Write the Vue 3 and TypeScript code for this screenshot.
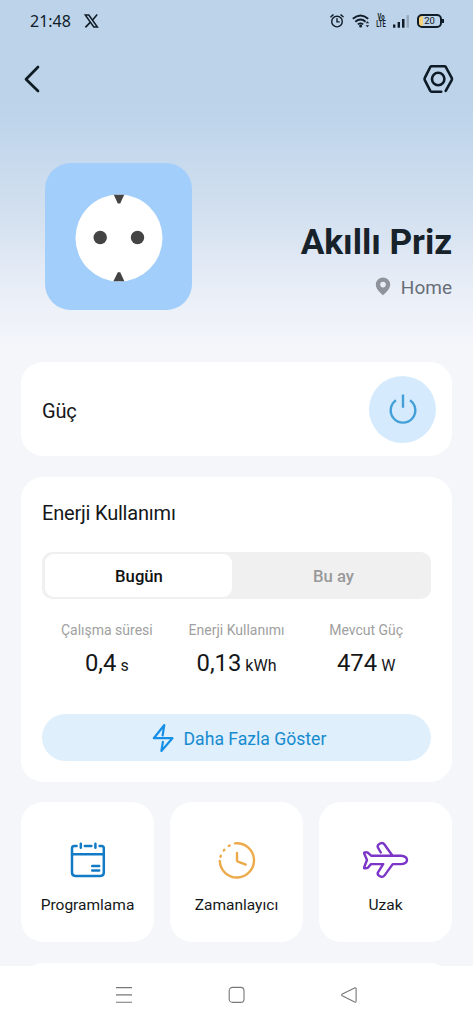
<script setup lang="ts">
import { ref } from 'vue'

interface Stat {
  label: string
  value: string
  unit: string
}

const stats: Stat[] = [
  { label: 'Çalışma süresi', value: '0,4', unit: 's' },
  { label: 'Enerji Kullanımı', value: '0,13', unit: 'kWh' },
  { label: 'Mevcut Güç', value: '474', unit: 'W' },
]

const periods: string[] = ['Bugün', 'Bu ay']
const active = ref<number>(0)
</script>

<template>
  <div class="screen">
    <header class="status">
      <span class="time">21:48</span>
      <svg class="x-logo" width="15" height="14" viewBox="0 0 15 14" fill="none" stroke="#101c28">
        <path d="M1.2 1h3.6l8.6 12H9.8z" stroke-width="1.5" />
        <path d="M13.2.6 8.6 5.9M6.2 8.4 1.4 13.4" stroke-width="1.6" />
      </svg>
      <div class="indicators">
        <svg width="14" height="14" viewBox="0 0 14 14" fill="none" stroke="#101c28" stroke-width="1.4" stroke-linecap="round">
          <circle cx="7" cy="7.6" r="5.3" />
          <path d="M7 4.8v3.1h2.2M.9 2.8 3.1.9M13.1 2.8 10.9.9" />
        </svg>
        <svg class="wifi" width="18" height="14" viewBox="0 0 18 14" fill="none" stroke="#101c28" stroke-width="1.8">
          <path d="M.8 4.8Q8.5-1.8 16.2 4.8M3.3 7.7q5.2-4.4 10.3 0M5.8 10.4q2.7-2 5.4 0" />
          <circle cx="8.6" cy="12" r="1.5" fill="#101c28" stroke="none" />
          <path d="m13.6 9.2 1.8-2 1.8 2zM13.6 11.2l1.8 2 1.8-2z" fill="#101c28" stroke="none" />
        </svg>
        <span class="volte">Vo LTE</span>
        <svg class="signal" width="18" height="14" viewBox="0 0 18 14" fill="#101c28">
          <rect x="1" y="10.5" width="2.4" height="3.2" />
          <rect x="5.6" y="8" width="2.4" height="5.7" />
          <rect x="10" y="5" width="2.5" height="8.7" />
          <rect x="14.5" y="1.2" width="2.5" height="12.5" fill="#98a9bb" />
        </svg>
        <span class="battery">20</span>
      </div>
    </header>

    <nav class="topbar">
      <svg width="16" height="28" viewBox="0 0 16 28" fill="none" stroke="#101c24" stroke-width="2.7" stroke-linecap="round" stroke-linejoin="round">
        <path d="M14 2 2 14.2 14 26" />
      </svg>
      <svg width="32" height="30" viewBox="0 0 32 30" fill="none" stroke="#0e1b26" stroke-width="2.6" stroke-linecap="round" stroke-linejoin="round">
        <path d="M19.2 27.7H9.6Q8.8 27.7 8.3 26.9L2.8 16.2Q2.2 15 2.8 13.9L8.3 3Q8.8 2.2 9.6 2.2h12.8q.9 0 1.4.8l5.9 10.9q.6 1.1 0 2.3l-6 10.7" />
        <circle cx="16.2" cy="15" r="6.2" />
      </svg>
    </nav>

    <section class="hero">
      <div class="tile">
        <svg width="88" height="88" viewBox="0 0 88 88">
          <circle cx="44" cy="44" r="43.5" fill="#fff" />
          <circle cx="25.2" cy="43.5" r="6.7" fill="#444" />
          <circle cx="62.5" cy="43.5" r="6.7" fill="#444" />
          <path d="M38.8.7h10.4L45.2 9.4h-2.4zM38.4 87.2h11L45.2 78.2h-2.4z" fill="#444" />
        </svg>
      </div>
      <div class="identity">
        <h1>Akıllı Priz</h1>
        <p class="place">
          <svg width="16" height="19" viewBox="0 0 16 19">
            <path d="M8 .5A7.2 7.2 0 0 0 .8 7.6C.8 12.5 6 16.4 8 18.3c2-1.9 7.2-5.8 7.2-10.7A7.2 7.2 0 0 0 8 .5zm0 4.3a2.8 2.8 0 1 1 0 5.6 2.8 2.8 0 0 1 0-5.6z" fill="#8f949c" fill-rule="evenodd" />
          </svg>
          <span>Home</span>
        </p>
      </div>
    </section>

    <main class="content">
      <section class="card power">
        <span class="title">Güç</span>
        <button class="power-button" aria-label="Güç">
          <svg width="30" height="30" viewBox="0 0 30 30" fill="none" stroke="#439fd8" stroke-width="2.4">
            <path d="M8 6.2a12.3 12.3 0 1 0 14 0M15 .6v13.2" />
          </svg>
        </button>
      </section>

      <section class="card energy">
        <h2 class="title">Enerji Kullanımı</h2>
        <div class="tabs">
          <button v-for="(p, i) in periods" :key="p" class="tab" :class="{ on: active === i }" @click="active = i">{{ p }}</button>
        </div>
        <div class="stats">
          <div v-for="s in stats" :key="s.label" class="stat">
            <span class="label">{{ s.label }}</span>
            <span class="figure">{{ s.value }}<small>{{ s.unit }}</small></span>
          </div>
        </div>
        <button class="more">
          <svg width="22" height="30" viewBox="0 0 22 30" fill="none" stroke="#1590e6" stroke-width="2.2" stroke-linecap="round" stroke-linejoin="round">
            <path d="M10.6 12.5 12.3 2 1.8 15.2h18.6L9.4 28l1.5-9.2" />
          </svg>
          <span>Daha Fazla Göster</span>
        </button>
      </section>

      <section class="shortcuts">
        <div class="card shortcut">
          <svg width="46" height="38" viewBox="0 0 46 38" fill="none" stroke="#127bc5" stroke-width="2.5" stroke-linecap="round">
            <path d="M11.6 5.1H9.2Q7 5.1 7 7.6v24q0 3.3 3.3 3.3h25.2q3.3 0 3.3-3.3v-24q0-2.5-2.2-2.5H34.6M19.8 5.1h6.6M15.8 2.7v4M30.4 2.7v4" />
            <path d="M7 13.3h31.8M27.2 25h7M27.2 29.5h7" />
          </svg>
          <span>Programlama</span>
        </div>
        <div class="card shortcut">
          <svg width="46" height="38" viewBox="0 0 46 38" fill="none" stroke="#edaa4a" stroke-width="2.4" stroke-linecap="round">
            <path d="M21 2.4A17.1 17.1 0 1 1 5.8 20M6.5 15.7l.3-.9M9.8 9.5l.6-.7M14.8 5l.9-.5" />
            <path d="M23 12v7.2q0 1 1 1.4l7.8 3" />
          </svg>
          <span>Zamanlayıcı</span>
        </div>
        <div class="card shortcut">
          <svg width="46" height="38" viewBox="0 0 46 38" fill="none" stroke="#7b36c8" stroke-width="2.4" stroke-linecap="round" stroke-linejoin="round">
            <path d="M17.8 11.5 15 6.6Q14 4.4 16 3.2L17.5 2.3Q19.8 1.3 21.3 3.2L29.5 14.8H38.5Q44 15.6 44 19T38.5 23.1H29.7L21.6 34.4Q20.1 36.4 18 35.7L16.1 34.7Q14 33.4 15 31.4L20.2 23.1H8L4.6 27Q3.1 27.6 .9 27L4 19 .9 11.8Q2.9 10.8 4.6 11.5L8.4 14.8H29.5" />
          </svg>
          <span>Uzak</span>
        </div>
      </section>
      <div class="next-card"></div>
    </main>

    <footer class="system-nav">
      <svg width="18" height="18" viewBox="0 0 18 18" stroke="#777" stroke-width="1.1"><path d="M1 1.6h16M1 8.9h16M1 16.2h16" /></svg>
      <svg width="18" height="18" viewBox="0 0 18 18" fill="none" stroke="#777" stroke-width="1.1"><rect x="1.2" y="1.4" width="14.8" height="15" rx="3.4" /></svg>
      <svg width="18" height="18" viewBox="0 0 18 18" fill="none" stroke="#777" stroke-width="1.1"><path d="M14.6 1.9 2.3 8q-1.4.9 0 1.8l12.3 6.3q1.5.5 1.5-1V3q0-1.5-1.5-1.1z" /></svg>
    </footer>
  </div>
</template>

<style>
body {
  margin: 0;
  background: #f4f6fa;
}
</style>

<style scoped>
* {
  box-sizing: border-box;
}

.screen {
  width: 473px;
  height: 1024px;
  overflow: hidden;
  display: flex;
  flex-direction: column;
  font-family: Roboto, "Noto Sans", sans-serif;
  color: #151719;
  background: linear-gradient(#bcd3ea 0, #bcd3ea 108px, #d4e1f0 220px, #e9eef7 290px, #f4f6fa 350px);
}

svg {
  display: block;
  flex: none;
}

button {
  border: 0;
  padding: 0;
  font-family: inherit;
}

.status {
  height: 42px;
  flex: none;
  display: flex;
  align-items: center;
  padding: 0 31px 0 30px;
}

.time {
  width: 54px;
  font: 16px/20px "Noto Sans", sans-serif;
  color: #101c28;
}

.indicators {
  margin-left: auto;
  display: flex;
  align-items: center;
}

.wifi {
  margin-left: 8px;
}

.volte {
  margin: 0 -3px 0 2px;
  width: 18px;
  font: 700 9px/7.5px Roboto, sans-serif;
  text-align: center;
  transform: scaleX(0.66);
  color: #101c28;
}

.signal {
  margin-left: 5px;
}

.battery {
  position: relative;
  margin-left: 7px;
  width: 25px;
  height: 14px;
  border: 2px solid #101c28;
  border-radius: 5px;
  background: linear-gradient(90deg, #f6d37c 4px, transparent 4px);
  font: 9.5px/10px Roboto, sans-serif;
  text-align: center;
}

.battery::after {
  content: "";
  position: absolute;
  right: -4px;
  top: 3px;
  width: 2px;
  height: 4px;
  background: #101c28;
}

.topbar {
  height: 74px;
  flex: none;
  display: flex;
  justify-content: space-between;
  align-items: center;
  padding: 0 19px 0 24px;
}

.hero {
  height: 246px;
  flex: none;
  display: flex;
  justify-content: space-between;
  padding: 47px 21px 0 45px;
}

.tile {
  width: 147px;
  height: 147px;
  border-radius: 26px;
  background: #a2cefb;
  display: flex;
  align-items: center;
  justify-content: center;
  padding: 2px 0 0 1px;
}

.identity {
  text-align: right;
  padding-top: 56px;
}

h1 {
  margin: 0;
  font-size: 35.2px;
  line-height: 46px;
  font-weight: 700;
  letter-spacing: -0.05px;
  color: #17222a;
}

.place {
  margin: 9px 0 0;
  display: flex;
  justify-content: flex-end;
  gap: 10px;
  font-size: 19px;
  line-height: 27px;
  color: #686e77;
}

.place svg {
  margin-top: 3px;
}

.content {
  flex: 1;
  min-height: 0;
  padding: 0 21px;
}

.card {
  background: #fff;
  border-radius: 22px;
}

.title {
  margin: 0;
  font-size: 20px;
  font-weight: 400;
  letter-spacing: -0.2px;
  line-height: 26px;
}

.power {
  height: 94px;
  display: flex;
  align-items: center;
  justify-content: space-between;
  padding: 0 16px 0 21px;
}

.power .title {
  padding-top: 3px;
}

.power-button {
  width: 67px;
  height: 67px;
  border-radius: 50%;
  background: #d5ebfd;
  display: flex;
  align-items: center;
  justify-content: center;
}

.energy {
  margin-top: 21px;
  height: 305px;
  padding: 23px 21px 0;
}

.tabs {
  margin-top: 26px;
  height: 47px;
  display: grid;
  grid-template-columns: 187px 1fr;
  padding: 2px 3px;
  border-radius: 10px;
  background: #f0f0f0;
}

.tab {
  border-radius: 9px;
  background: transparent;
  padding: 2px 0 0 7px;
  font-size: 16.7px;
  font-weight: 500;
  color: #999;
}

.tab.on {
  padding-left: 1px;
  background: #fff;
  color: #111;
}

.stats {
  display: grid;
  grid-template-columns: repeat(3, 1fr);
  margin-top: 20px;
}

.stat {
  display: flex;
  flex-direction: column;
  align-items: center;
}

.label {
  font-size: 14px;
  line-height: 22px;
  color: #a0a0a0;
}

.figure {
  margin-top: 7px;
  font-size: 23.8px;
  line-height: 30px;
}

.figure small {
  margin-left: 4px;
  font-size: 16px;
}

.more {
  width: 100%;
  height: 47px;
  margin-top: 33px;
  border-radius: 24px;
  background: #dfeffb;
  display: flex;
  align-items: center;
  justify-content: center;
  gap: 10px;
  padding-left: 5px;
  font-size: 17.6px;
  color: #168bd0;
}

.more span {
  padding-top: 2px;
}

.shortcuts {
  margin-top: 20px;
  display: grid;
  grid-template-columns: repeat(3, 1fr);
  gap: 16px;
}

.shortcut {
  height: 140px;
  display: flex;
  flex-direction: column;
  align-items: center;
  padding-top: 39px;
  font-size: 15.5px;
  line-height: 22px;
}

.shortcut span {
  margin-top: 15px;
}

.next-card {
  margin-top: 21px;
  height: 60px;
  border-radius: 22px;
  background: #fff;
}

.system-nav {
  position: relative;
  height: 58px;
  flex: none;
  display: flex;
  justify-content: space-between;
  padding: 20px 115px 0;
  background: #fff;
}
</style>
